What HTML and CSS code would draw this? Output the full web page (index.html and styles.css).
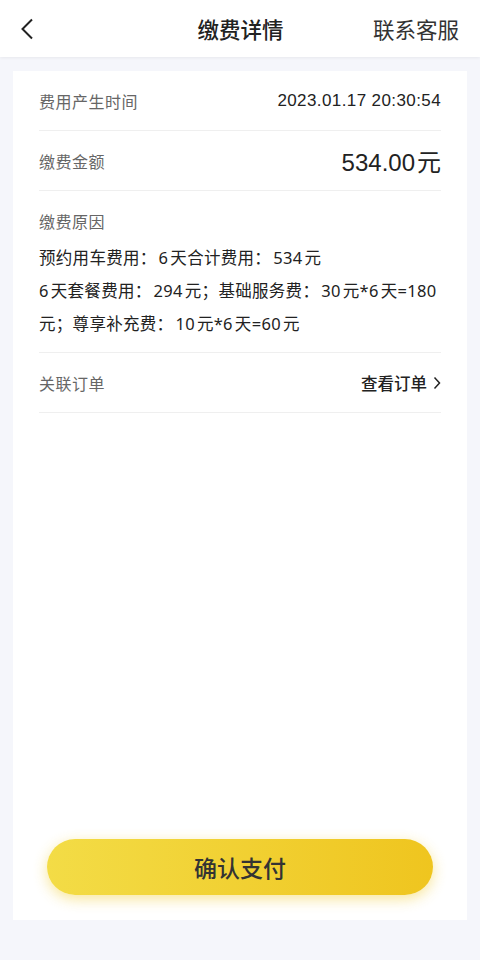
FILE: index.html
```html
<!DOCTYPE html>
<html>
<head>
<meta charset="utf-8">
<title>缴费详情</title>
<link rel="stylesheet" href="styles.css">
</head>
<body>

<header class="nav-bar">
  <span class="nav-back">
    <svg width="14" height="22" viewBox="0 0 14 22"><path d="M12 1.5 L2.5 11 L12 20.5" fill="none" stroke="#222" stroke-width="2"/></svg>
  </span>
  <h1 class="nav-title">缴费详情</h1>
  <span class="nav-action">联系客服</span>
</header>

<main class="page">
  <section class="detail-card">
    <div class="row">
      <span class="row-label">费用产生时间</span>
      <span class="row-value">2023.01.17 20:30:54</span>
    </div>
    <div class="row">
      <span class="row-label">缴费金额</span>
      <span class="row-amount">534.00<span class="unit">元</span></span>
    </div>
    <div class="reason">
      <div class="row-label">缴费原因</div>
      <!-- number runs get a little space next to the CJK text -->
      <p class="reason-text">预约用车费用：<span class="num">6</span>天合计费用：<span class="num">534</span>元<br><span class="num-r">6</span>天套餐费用：<span class="num">294</span>元；基础服务费：<span class="num">30</span>元<span class="num-r">*6</span>天<span class="sym">=180</span><br>元；尊享补充费：<span class="num">10</span>元<span class="num-r">*6</span>天<span class="num-r">=60</span>元</p>
    </div>
    <div class="row">
      <span class="row-label">关联订单</span>
      <span class="row-link">查看订单
        <svg width="8" height="14" viewBox="0 0 8 14"><path d="M1.5 1.5 L6.5 7 L1.5 12.5" fill="none" stroke="#222" stroke-width="1.5"/></svg>
      </span>
    </div>

    <button type="button" class="pay-button">确认支付</button>
  </section>
</main>

</body>
</html>
```

FILE: styles.css
```css
* {
  box-sizing: border-box;
}
body {
  margin: 0;
  background-color: #f5f6fb;
  font-family: "Noto Sans CJK SC", "Noto Sans", sans-serif;
  color: #222;
}

.nav-bar {
  height: 57px;
  background-color: #fff;
  display: flex;
  align-items: center;
  padding: 0 21px 0 20px;
  box-shadow: 0 1px 3px rgba(0, 0, 0, 0.06);
}
.nav-back {
  display: flex;
  width: 40px;
}
.nav-title {
  flex: 1;
  text-align: center;
  margin: 0;
  font-size: 21.5px;
  font-weight: 500;
  padding-left: 48px;
}
.nav-action {
  font-size: 21.5px;
  color: #333;
}

.page {
  padding: 14px 13px 0;
}
.detail-card {
  background-color: #fff;
  height: 849px;
  padding: 0 26px 25px;
  display: flex;
  flex-direction: column;
}

.row {
  height: 60px;
  display: flex;
  align-items: center;
  justify-content: space-between;
  border-bottom: 1px solid #efefef;
}
.row-label {
  font-size: 16px;
  color: #666;
  letter-spacing: 0.5px;
}
.row-value {
  font-family: "Liberation Sans", Arial, sans-serif;
  font-size: 17px;
  letter-spacing: 0.4px;
  color: #222;
}
.row-amount {
  font-family: "Liberation Sans", Arial, sans-serif;
  font-size: 24px;
  color: #222;
}
.row-amount .unit {
  font-family: "Noto Sans CJK SC", sans-serif;
  margin-left: 2px;
}
.row-link {
  font-size: 16.5px;
  font-weight: 500;
  color: #222;
  display: flex;
  align-items: center;
  gap: 6px;
}

.reason {
  padding: 18px 0 12px;
  border-bottom: 1px solid #efefef;
}
.reason .row-label {
  line-height: 24px;
}
.reason-text {
  margin: 8px 0 0;
  font-size: 16.5px;
  line-height: 33px;
  letter-spacing: 0.3px;
  color: #222;
  white-space: nowrap;
}
.num, .num-r, .sym {
  font-family: "Noto Sans", sans-serif;
}
.num {
  margin: 0 2px;
}
.num-r {
  margin-right: 2px;
}

.pay-button {
  margin: auto 8px 0;
  height: 56px;
  border: none;
  border-radius: 28px;
  background: linear-gradient(90deg, #f3dc46, #efc51f);
  box-shadow: 0 4px 14px rgba(240, 200, 30, 0.45);
  font-family: "Noto Sans CJK SC", sans-serif;
  font-size: 23px;
  font-weight: 500;
  color: #333;
}
```
